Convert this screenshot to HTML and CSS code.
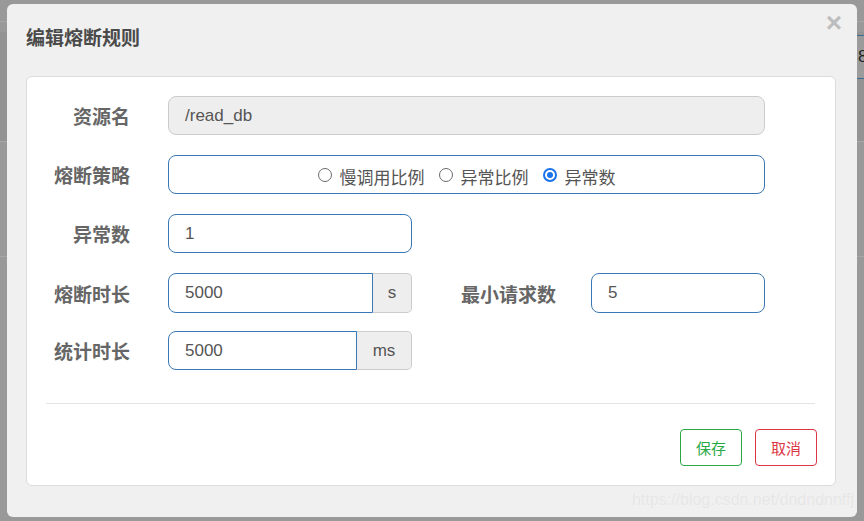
FILE: index.html
```html
<!DOCTYPE html>
<html lang="zh-CN">
<head>
<meta charset="utf-8">
<title>编辑熔断规则</title>
<link rel="stylesheet" href="styles.css">
</head>
<body>
<div class="backdrop">
  <div class="bg-top"></div>
  <div class="bg-band">
    <div class="bg-input">8</div>
  </div>
  <div class="bg-row"></div>
</div>

<div class="modal">
  <div class="modal-head">
    <h3 class="modal-title">编辑熔断规则</h3>
    <span class="close">&times;</span>
  </div>
  <div class="card">
    <div class="row">
      <label class="lbl">资源名</label>
      <div class="field wide disabled">/read_db</div>
    </div>
    <div class="row">
      <label class="lbl">熔断策略</label>
      <div class="field wide radios">
        <label class="radio"><span class="dot"></span>慢调用比例</label>
        <label class="radio"><span class="dot"></span>异常比例</label>
        <label class="radio"><span class="dot on"></span>异常数</label>
      </div>
    </div>
    <div class="row">
      <label class="lbl">异常数</label>
      <div class="field w244">1</div>
    </div>
    <div class="row">
      <label class="lbl">熔断时长</label>
      <div class="group">
        <div class="field gin w205">5000</div>
        <div class="addon w39">s</div>
      </div>
      <label class="lbl2">最小请求数</label>
      <div class="field w174">5</div>
    </div>
    <div class="row">
      <label class="lbl">统计时长</label>
      <div class="group">
        <div class="field gin w189">5000</div>
        <div class="addon w55">ms</div>
      </div>
    </div>
    <div class="sep"></div>
    <div class="actions">
      <button class="btn save">保存</button>
      <button class="btn cancel">取消</button>
    </div>
  </div>
  <div class="watermark">https://blog.csdn.net/dndndnnffj</div>
</div>
</body>
</html>
```

FILE: styles.css
```css
* { box-sizing: border-box; }
html, body { margin: 0; padding: 0; }
body {
  width: 864px;
  height: 521px;
  overflow: hidden;
  background: #999999;
  font-family: "Liberation Sans", "Noto Sans CJK SC", sans-serif;
  position: relative;
}
.backdrop { width: 864px; }
.bg-top { height: 22px; border-bottom: 1px solid #a6a6a6; }
.bg-band {
  margin-top: 10px;
  height: 110px;
  background: #939393;
  border-bottom: 1px solid #a8a8a8;
  padding-top: 3px;
}
.bg-input {
  margin-left: 855px;
  height: 44px;
  border-top: 1px solid #3f6a92;
  border-bottom: 1px solid #3f6a92;
  background: #9b9b9b;
  color: #222;
  font-size: 17px;
  line-height: 42px;
  padding-left: 3px;
}
.bg-row { height: 115px; border-bottom: 1px solid #a6a6a6; }

.modal {
  position: absolute;
  left: 7px;
  top: 4px;
  width: 850px;
  height: 513px;
  background: #f0f0f0;
  border-radius: 6px;
  padding: 0 21px 0 19px;
}
.modal-head {
  height: 72px;
  display: flex;
  align-items: flex-start;
  justify-content: space-between;
}
.modal-title {
  margin: 20px 0 0 0;
  font-size: 19px;
  font-weight: bold;
  color: #4a4a4a;
  font-family: "Noto Sans CJK SC", sans-serif;
  line-height: 26px;
}
.close {
  margin-top: 4px;
  margin-right: -6px;
  font-size: 28px;
  line-height: 30px;
  color: #bdbdbd;
  font-weight: bold;
  font-family: "Liberation Sans", sans-serif;
}
.card {
  background: #fff;
  border: 1px solid #dcdcdc;
  border-radius: 6px;
  height: 410px;
  padding: 19px 70px 0 0;
  display: flex;
  flex-direction: column;
}
.row {
  display: flex;
  align-items: center;
  height: 39px;
  margin-bottom: 20px;
}
.row:nth-child(5) { margin-bottom: 0; }
.row:nth-child(4) { height: 40px; margin-bottom: 18px; }
.lbl, .lbl2 {
  font-family: "Noto Sans CJK SC", sans-serif;
  font-weight: bold;
  font-size: 19px;
  color: #666;
  text-align: right;
}
.lbl { width: 103px; margin-right: 38px; flex: none; }
.lbl2 { width: 144px; margin-right: 35px; flex: none; }
.field {
  height: 100%;
  border: 1px solid #3a78b5;
  border-radius: 8px;
  background: #fff;
  font-size: 17px;
  color: #555;
  padding-left: 16px;
  display: flex;
  align-items: center;
  flex: none;
}
.wide { width: 597px; }
.w244 { width: 244px; }
.w205 { width: 205px; }
.w189 { width: 189px; }
.w174 { width: 174px; }
.disabled { background: #eeeeee; border-color: #cccccc; }
.group { display: flex; height: 100%; flex: none; }
.gin { border-radius: 8px 0 0 8px; }
.addon {
  height: 100%;
  background: #eeeeee;
  border: 1px solid #cccccc;
  border-left: none;
  border-radius: 0 5px 5px 0;
  font-size: 17px;
  color: #555;
  display: flex;
  align-items: center;
  justify-content: center;
}
.w39 { width: 39px; }
.w55 { width: 55px; }
.radios {
  justify-content: center;
  padding-left: 0;
  padding-top: 3px;
  font-family: "Noto Sans CJK SC", sans-serif;
  font-size: 17px;
  color: #555;
}
.radio { display: flex; align-items: center; margin: 0 7px; }
.dot {
  width: 14px;
  height: 14px;
  border: 1px solid #6b6b6b;
  border-radius: 50%;
  margin-right: 8px;
  margin-top: -2px;
  position: relative;
}
.dot.on { border: 2px solid #1a73e8; }
.dot.on::after {
  content: "";
  position: absolute;
  left: 2px;
  top: 2px;
  width: 6px;
  height: 6px;
  border-radius: 50%;
  background: #1a73e8;
}
.sep {
  height: 1px;
  background: #e3e3e3;
  margin: 33px -50px 0 19px;
}
.actions {
  display: flex;
  justify-content: flex-end;
  gap: 13px;
  margin: 25px -52px 0 0;
}
.btn {
  width: 62px;
  height: 37px;
  background: #fff;
  border-radius: 4px;
  font-family: "Noto Sans CJK SC", sans-serif;
  font-size: 15px;
  padding: 0;
  cursor: pointer;
}
.save { border: 1px solid #28a745; color: #28a745; }
.cancel { border: 1px solid #dc3545; color: #dc3545; }
.watermark {
  text-align: right;
  margin: 5px -18px 0 0;
  font-size: 16px;
  color: #e6e6e6;
  text-shadow: 0 0 1px #f7f7f7;
}
```
